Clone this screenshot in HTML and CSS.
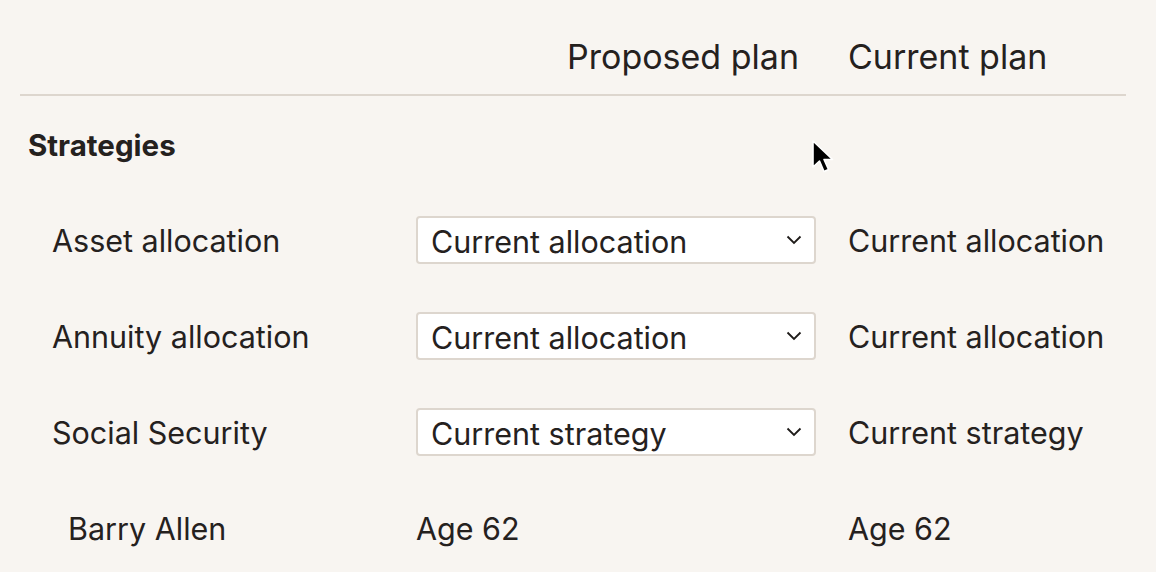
FILE: index.html
```html
<!DOCTYPE html>
<html lang="en">
<head>
<meta charset="utf-8">
<title>Plan comparison</title>
<link rel="stylesheet" href="styles.css">
</head>
<body>
<div class="page">
  <div class="header">
    <div class="h-label"></div>
    <div class="h-proposed">Proposed plan</div>
    <div class="h-current">Current plan</div>
  </div>
  <div class="section-title">Strategies</div>
  <div class="rows">
    <div class="row">
      <div class="label">Asset allocation</div>
      <div class="select"><span>Current allocation</span>
        <svg class="chev" viewBox="0 0 16 10" width="16" height="10"><path d="M1.5 1.5 L8 8 L14.5 1.5" fill="none" stroke="#1e1b19" stroke-width="1.8"/></svg>
      </div>
      <div class="value">Current allocation</div>
    </div>
    <div class="row">
      <div class="label">Annuity allocation</div>
      <div class="select"><span>Current allocation</span>
        <svg class="chev" viewBox="0 0 16 10" width="16" height="10"><path d="M1.5 1.5 L8 8 L14.5 1.5" fill="none" stroke="#1e1b19" stroke-width="1.8"/></svg>
      </div>
      <div class="value">Current allocation</div>
    </div>
    <div class="row">
      <div class="label">Social Security</div>
      <div class="select"><span>Current strategy</span>
        <svg class="chev" viewBox="0 0 16 10" width="16" height="10"><path d="M1.5 1.5 L8 8 L14.5 1.5" fill="none" stroke="#1e1b19" stroke-width="1.8"/></svg>
      </div>
      <div class="value">Current strategy</div>
    </div>
    <div class="row">
      <div class="label sub">Barry Allen</div>
      <div class="plain">Age 62</div>
      <div class="value">Age 62</div>
    </div>
  </div>
  <svg class="cursor" width="26" height="38" viewBox="0 0 26 38"><path d="M2 2 L2 28 L8.5 22 L13 32.5 L17.5 30.5 L13 20.5 L21.5 20.5 Z" fill="#000" stroke="#fff" stroke-width="1.6" stroke-linejoin="round"/></svg>
</div>
</body>
</html>
```

FILE: styles.css
```css
html, body {
  margin: 0;
  padding: 0;
  background: #f8f5f1;
}
body {
  font-family: Inter, "Noto Sans", sans-serif;
  color: #25211e;
  font-size: 30.5px;
}
.page {
  position: relative;
  width: 1156px;
  height: 572px;
  overflow: hidden;
}
.header {
  display: grid;
  grid-template-columns: 364px 400px 1fr;
  column-gap: 32px;
  margin: 0 30px 0 20px;
  height: 96px;
  border-bottom: 2px solid #ddd6ce;
  box-sizing: border-box;
  font-size: 34px;
  line-height: 40px;
  padding-top: 37px;
}
.h-proposed {
  text-align: right;
  padding-right: 17px;
}
.section-title {
  font-weight: 700;
  font-size: 29.5px;
  padding: 31px 0 0 28px;
  height: 60px;
  box-sizing: border-box;
}
.rows {
  padding-top: 36px;
}
.row {
  display: grid;
  grid-template-columns: 332px 400px 1fr;
  column-gap: 32px;
  align-items: center;
  height: 96px;
  padding-left: 52px;
}
.label.sub {
  padding-left: 16px;
}
.select {
  box-sizing: border-box;
  height: 48px;
  background: #fff;
  border: 2px solid #ddd6ce;
  border-radius: 4px;
  display: flex;
  align-items: center;
  justify-content: space-between;
  padding: 0 12px 0 13px;
}
.select span {
  padding-top: 2px;
}
.chev {
  display: block;
}
.cursor {
  position: absolute;
  left: 811px;
  top: 139px;
}
```
